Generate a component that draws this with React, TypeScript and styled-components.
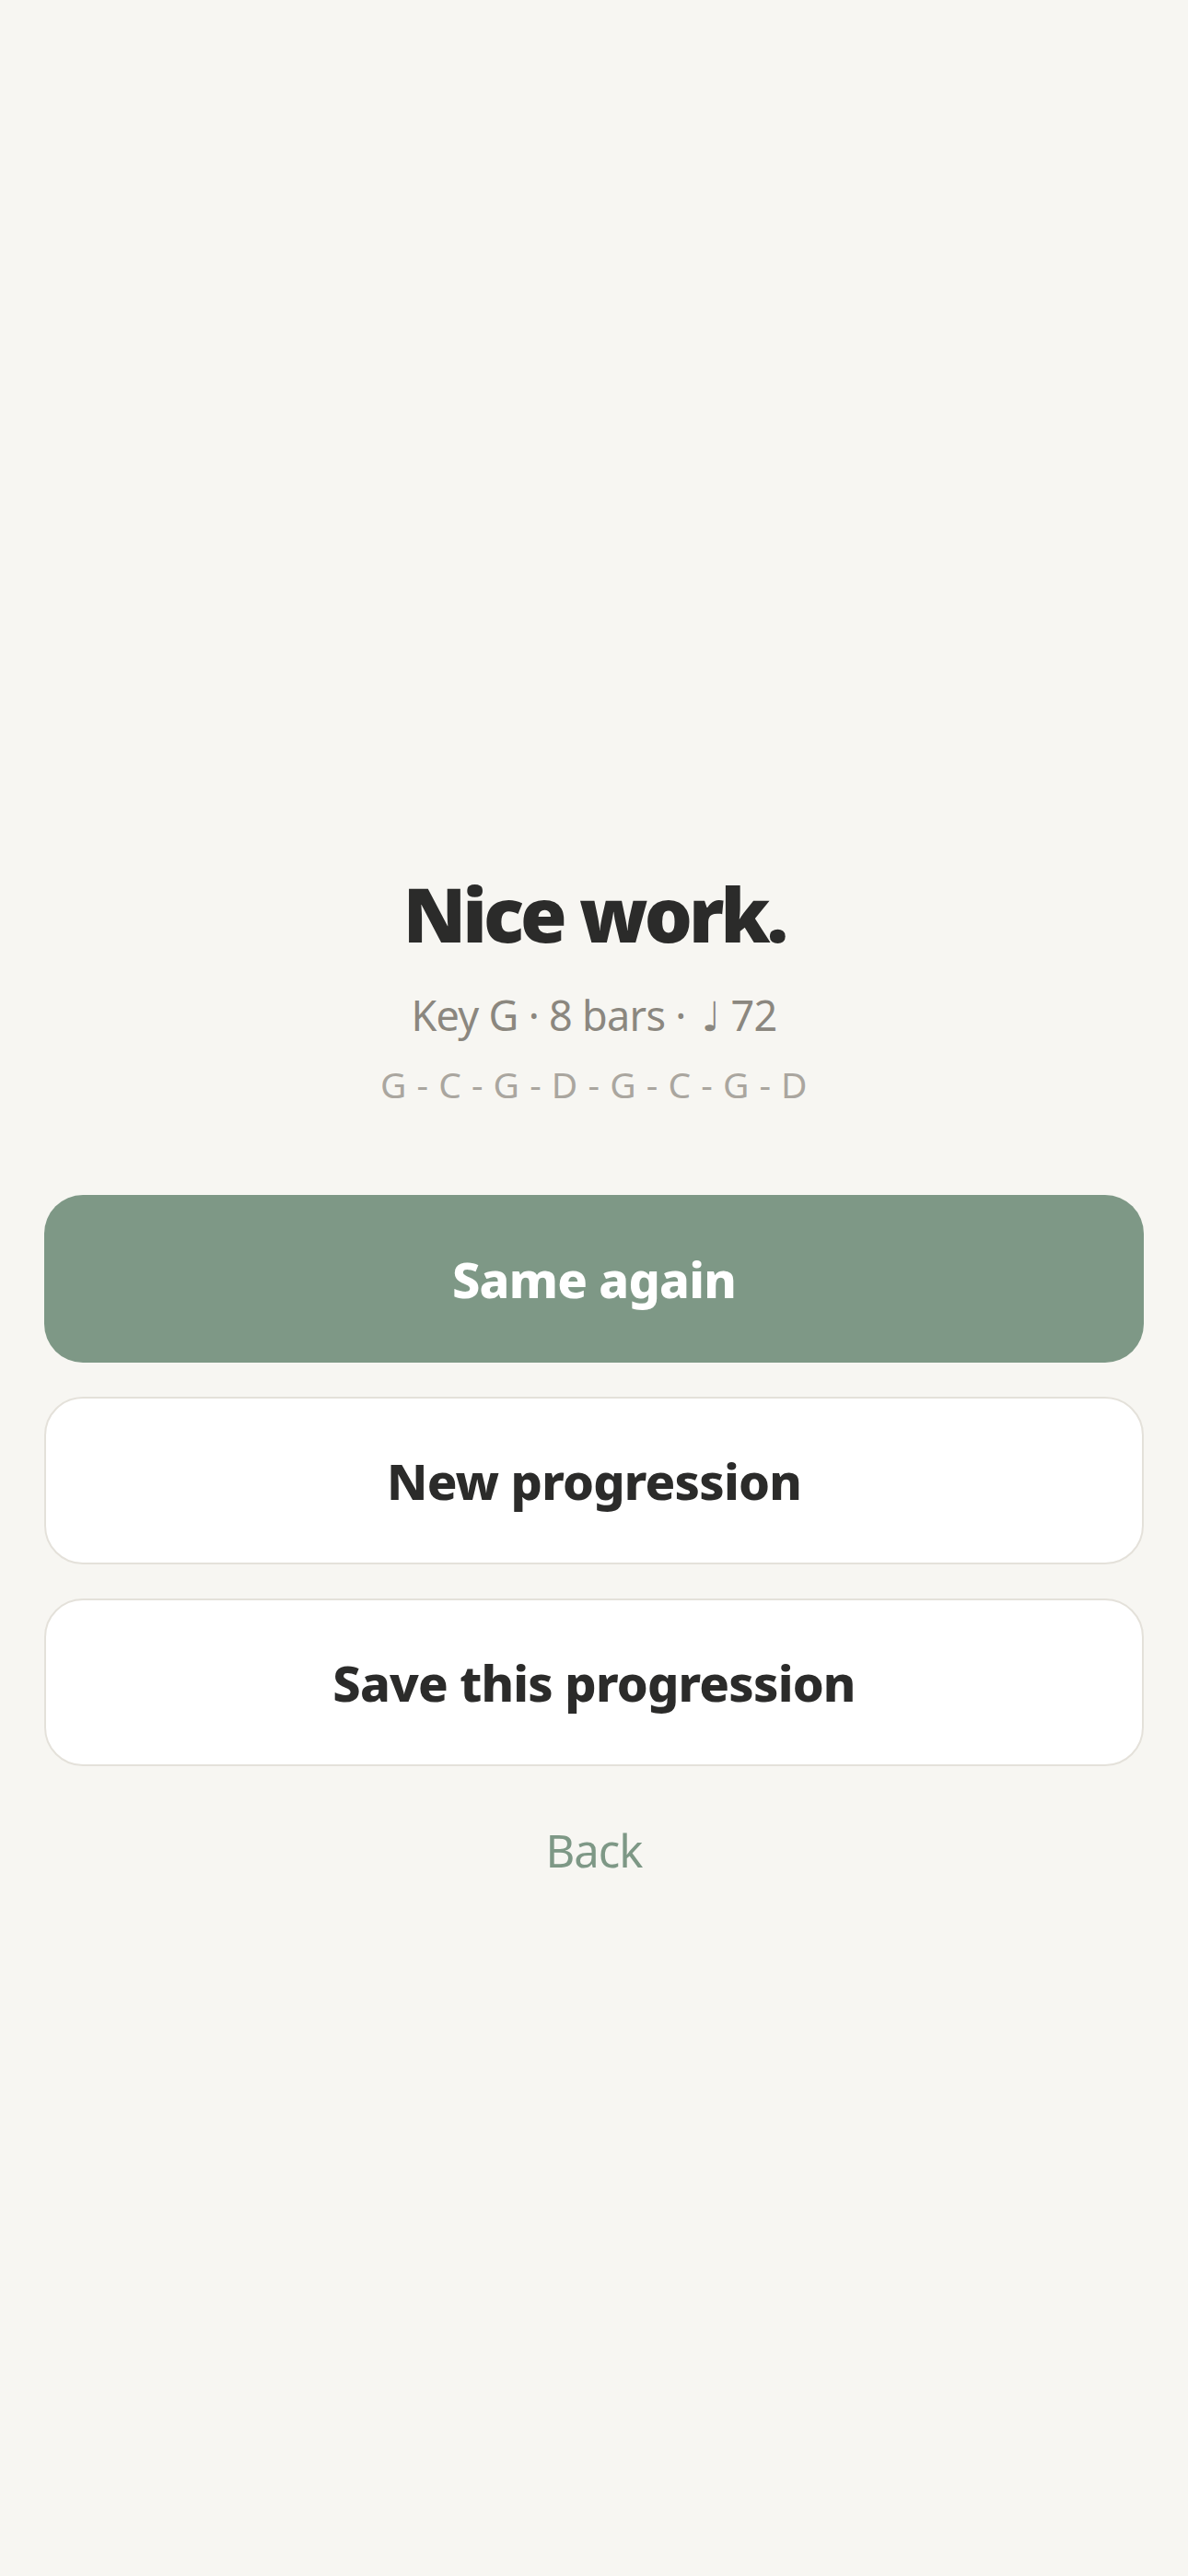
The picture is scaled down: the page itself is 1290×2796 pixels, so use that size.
import styled, { createGlobalStyle } from "styled-components";

const GlobalStyle = createGlobalStyle`
  html, body {
    margin: 0;
    padding: 0;
    background: #f7f6f2;
  }
  body {
    font-family: "Noto Sans", "Open Sans", sans-serif;
    -webkit-font-smoothing: antialiased;
  }
`;

type ButtonVariant = "primary" | "secondary";

const ACTIONS: { label: string; variant: ButtonVariant }[] = [
  { label: "Same again", variant: "primary" },
  { label: "New progression", variant: "secondary" },
  { label: "Save this progression", variant: "secondary" },
];

const CHORDS = ["G", "C", "G", "D", "G", "C", "G", "D"];

export default function App() {
  return (
    <>
      <GlobalStyle />
      <Screen>
        <Summary>
          <Title>Nice work.</Title>
          <Meta>
            Key G · 8 bars · <Note>♩</Note> 72
          </Meta>
          <Chords>{CHORDS.join(" - ")}</Chords>
        </Summary>
        <Actions>
          {ACTIONS.map((a) => (
            <ActionButton key={a.label} $variant={a.variant}>
              {a.label}
            </ActionButton>
          ))}
        </Actions>
        <BackLink>Back</BackLink>
      </Screen>
    </>
  );
}

/* ------ STYLE ------ */

const Screen = styled.main`
  min-height: 2796px;
  box-sizing: border-box;
  padding: 941px 48px 0;
  display: flex;
  flex-direction: column;
  align-items: stretch;
`;

const Summary = styled.section`
  display: flex;
  flex-direction: column;
  align-items: center;
  text-align: center;
`;

const Title = styled.h1`
  margin: 0;
  font-size: 82px;
  line-height: 100px;
  font-weight: 900;
  color: #2b2b2a;
  letter-spacing: -4px;
`;

const Meta = styled.p`
  margin: 33px 0 0;
  font-size: 45px;
  line-height: 56px;
  font-weight: 400;
  color: #8b877f;
  letter-spacing: -0.7px;
`;

const Note = styled.span`
  font-family: "DejaVu Sans", sans-serif;
  font-size: 44px;
  letter-spacing: 0;
  margin-left: 6px;
`;

const Chords = styled.p`
  margin: 20px 0 0;
  font-size: 39px;
  line-height: 50px;
  font-weight: 400;
  color: #aaa69f;
  letter-spacing: 0.5px;
`;

const Actions = styled.div`
  margin-top: 95px;
  display: flex;
  flex-direction: column;
  gap: 37px;
`;

const ActionButton = styled.button<{ $variant: ButtonVariant }>`
  height: 182px;
  border-radius: 42px;
  font-family: inherit;
  font-size: 54px;
  font-weight: 800;
  letter-spacing: -0.8px;
  cursor: pointer;
  background: ${(p) => (p.$variant === "primary" ? "#7e9886" : "#ffffff")};
  color: ${(p) => (p.$variant === "primary" ? "#ffffff" : "#2b2b2a")};
  border: ${(p) =>
    p.$variant === "primary" ? "none" : "2px solid #e4e1da"};
`;

const BackLink = styled.button`
  margin-top: 61px;
  align-self: center;
  background: none;
  border: none;
  padding: 0;
  font-family: inherit;
  font-size: 49px;
  line-height: 60px;
  font-weight: 400;
  letter-spacing: -1px;
  color: #7e9886;
  cursor: pointer;
`;
